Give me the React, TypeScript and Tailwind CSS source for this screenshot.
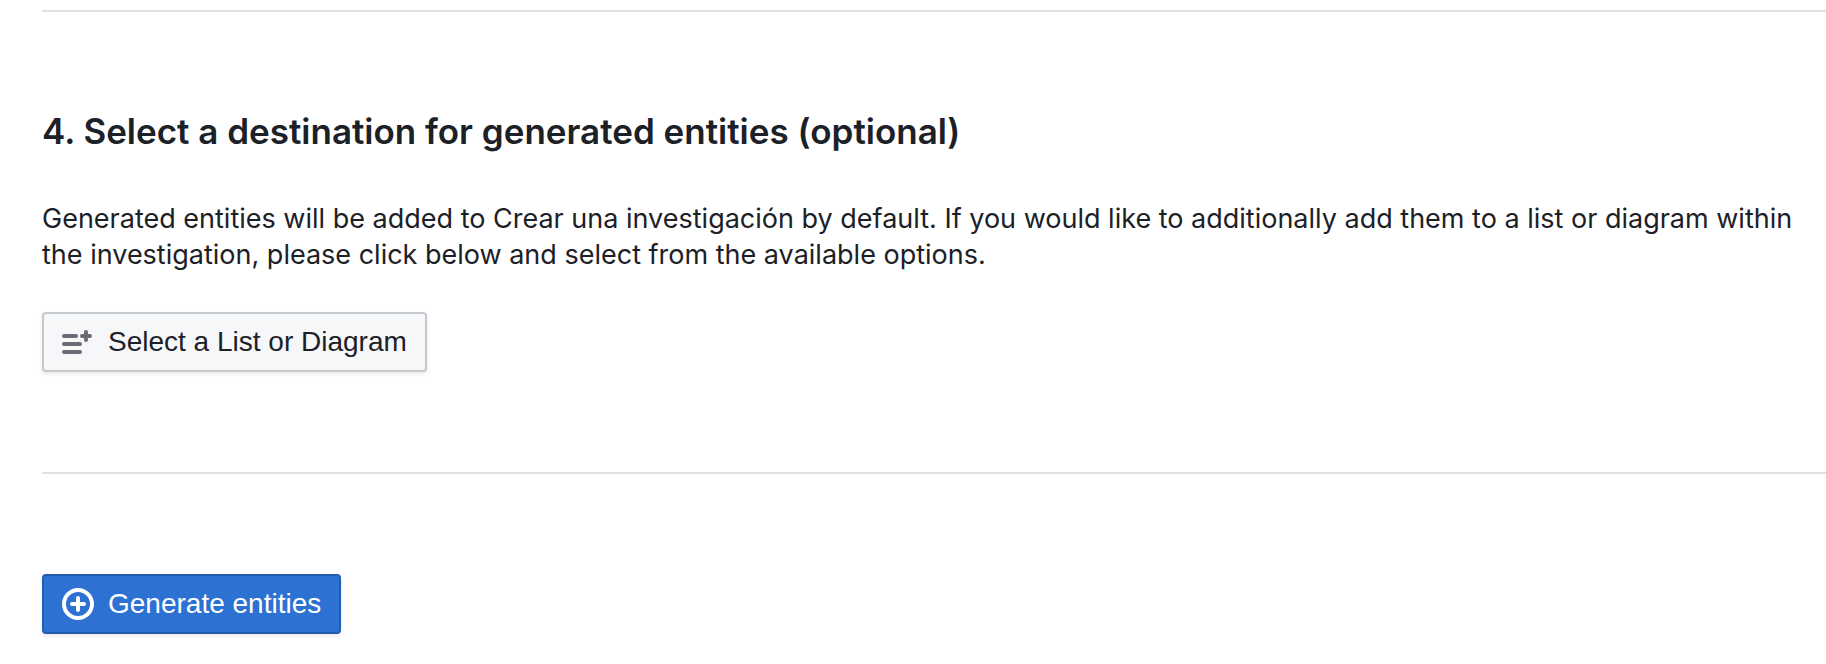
export default function App() {
  return (
    <main className="min-h-screen bg-white pt-2.5 pl-[42px] font-['Inter',sans-serif] text-[#1c2127]">
      <hr className="border-t-2 border-[#dce0e5]" />
      <section className="pt-[97px] pb-[100px]">
        <h2 className="text-[35px] leading-[44px] font-semibold">4. Select a destination for generated entities (optional)</h2>
        <p className="mt-12 text-[27px] leading-9">
          Generated entities will be added to Crear una investigación by default. If you would like to additionally add them to a list or diagram within the investigation, please click below and select from the available options.
        </p>
        <button type="button" className="mt-[39px] flex h-[60px] items-center gap-3.5 rounded-[4px] border-2 border-[#c5c8cc] bg-[#f6f7f9] px-[18px] font-['Liberation_Sans',sans-serif] text-[28px] shadow-[0_2px_4px_rgba(17,20,24,0.1)]">
          <svg width="32" height="32" viewBox="0 0 16 16" fill="#6b6b76" aria-hidden="true">
            <path d="M1 4h6a1 1 0 0 1 0 2H1a1 1 0 0 1 0-2zM1 8h8a1 1 0 0 1 0 2H1a1 1 0 0 1 0-2zM1 12h8a1 1 0 0 1 0 2H1a1 1 0 0 1 0-2zM11 3a1 1 0 0 1 2 0v1h1a1 1 0 0 1 0 2h-1v1a1 1 0 0 1-2 0V6h-1a1 1 0 0 1 0-2h1z" />
          </svg>
          Select a List or Diagram
        </button>
      </section>
      <hr className="border-t-2 border-[#dce0e5]" />
      <button type="button" className="mt-[100px] flex h-[60px] items-center gap-3.5 rounded-[4px] border-2 border-[#215db0] bg-[#2d72d2] px-[18px] font-['Liberation_Sans',sans-serif] text-[28px] text-white shadow-[0_2px_4px_rgba(17,20,24,0.1)]">
        <svg width="32" height="32" viewBox="0 0 16 16" fill="none" stroke="white" strokeWidth="2" aria-hidden="true">
          <circle cx="8" cy="8" r="7" />
          <path d="M8 5v6M5 8h6" strokeLinecap="round" />
        </svg>
        Generate entities
      </button>
    </main>
  );
}
